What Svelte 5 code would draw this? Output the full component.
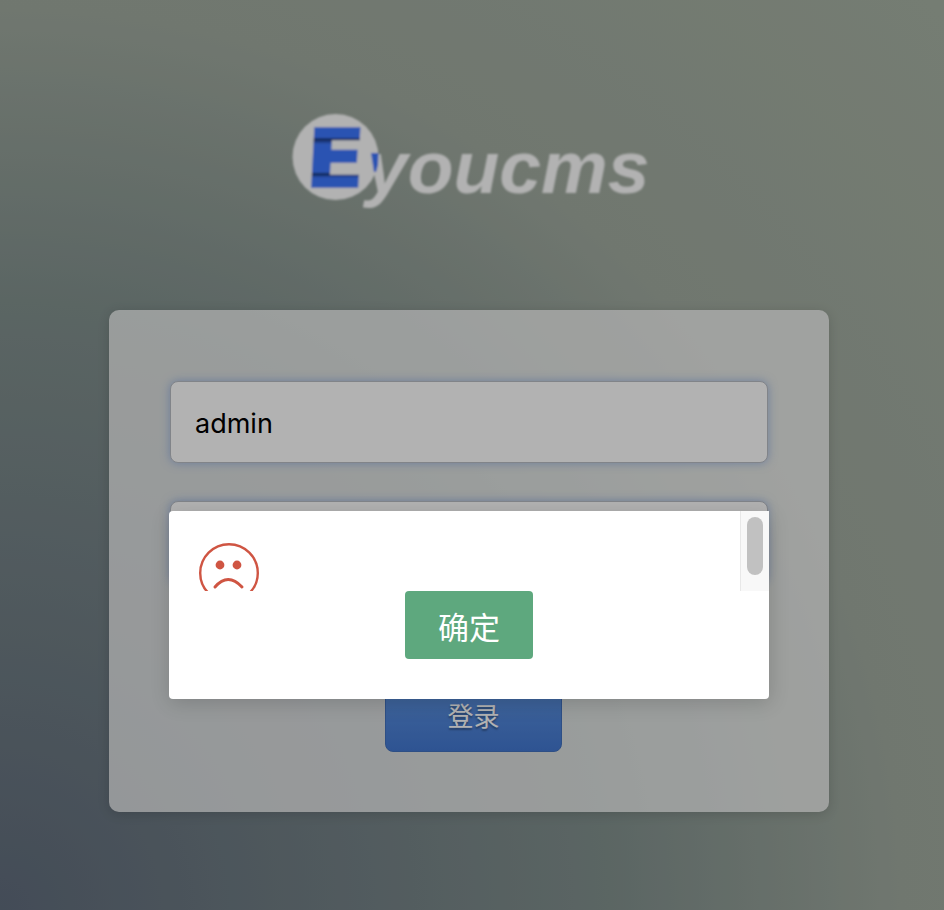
<script>
  let username = $state("admin");
  let password = $state("");
  let dialogOpen = $state(true);
</script>

<div class="page">
  <svg class="logo" viewBox="290 110 360 100" width="360" height="100" aria-label="Eyoucms">
    <defs>
      <!-- gradient runs in the E's own transformed coordinates -->
      <linearGradient id="e-fill" gradientUnits="userSpaceOnUse" x1="0" y1="-59" x2="0" y2="1">
        <stop offset="0" stop-color="#3c78ff" />
        <stop offset="0.16" stop-color="#3c78ff" />
        <stop offset="0.18" stop-color="#17306e" />
        <stop offset="0.27" stop-color="#3c78ff" />
        <stop offset="0.74" stop-color="#3c78ff" />
        <stop offset="0.76" stop-color="#17306e" />
        <stop offset="0.83" stop-color="#3c78ff" />
        <stop offset="1" stop-color="#3c78ff" />
      </linearGradient>
      <filter id="soft"><feGaussianBlur stdDeviation="0.8" /></filter>
      <filter id="soft-icon"><feGaussianBlur stdDeviation="0.35" /></filter>
    </defs>
    <g filter="url(#soft)">
      <circle cx="335.5" cy="157" r="43" fill="#fff" />
      <text class="logo-e" transform="translate(304 187) skewX(-3) scale(1.08 1)" fill="url(#e-fill)" stroke="url(#e-fill)" stroke-width="1.6">E</text>
      <text class="logo-word" x="366" y="193">youcms</text>
      <polygon points="371,153 378.5,153 378,165 376,172 374,172" fill="#3c78ff" />
    </g>
  </svg>

  <form class="card" onsubmit={(e) => e.preventDefault()}>
    <input class="field" type="text" bind:value={username} />
    <input class="field" type="password" bind:value={password} />
    <button class="submit" type="submit">登录</button>
  </form>

  <div class="shade"></div>

  {#if dialogOpen}
    <div class="dialog">
      <div class="dialog-body">
        <div class="dialog-content">
          <svg class="sad" viewBox="0 0 60 60" width="60" height="60">
            <g filter="url(#soft-icon)">
              <circle cx="30" cy="30" r="28.8" fill="none" stroke="#cf5443" stroke-width="2.4" />
              <circle cx="21" cy="22" r="4.4" fill="#cf5443" />
              <circle cx="38" cy="22" r="4.4" fill="#cf5443" />
              <path d="M16 44 Q29 29 43 44" fill="none" stroke="#cf5443" stroke-width="3" stroke-linecap="round" />
            </g>
          </svg>
        </div>
        <div class="scrollbar"><div class="thumb"></div></div>
      </div>
      <div class="dialog-actions">
        <button class="confirm" type="button" onclick={() => (dialogOpen = true)}>确定</button>
      </div>
    </div>
  {/if}
</div>

<style>
  :global(body) {
    margin: 0;
  }

  .page {
    position: relative;
    height: 910px;
    overflow: hidden;
    display: flex;
    flex-direction: column;
    align-items: center;
    background: radial-gradient(circle at 0% 100%, #616d7d 0, #83928f 610px, #a1aba0 900px, #a8b3a5 1300px);
  }

  .logo {
    display: block;
    flex: none;
    margin-top: 110px;
    margin-left: -4px;
  }

  .logo-e {
    font-family: "DejaVu Sans", sans-serif;
    font-size: 81px;
    font-weight: 700;
  }

  .logo-word {
    font-family: "Liberation Sans", sans-serif;
    font-size: 75px;
    font-weight: 700;
    font-style: italic;
    fill: #fff;
  }

  .card {
    box-sizing: border-box;
    width: 720px;
    height: 502px;
    flex: none;
    margin-top: 100px;
    margin-left: -6px;
    padding: 71px 61px 60px;
    display: flex;
    flex-direction: column;
    gap: 38px;
    border-radius: 10px;
    background: rgba(255, 255, 255, 0.72);
    box-shadow: 0 2px 12px rgba(0, 0, 0, 0.15);
  }

  .field {
    box-sizing: border-box;
    flex: none;
    width: 598px;
    height: 82px;
    padding: 2px 24px 0;
    border: 1px solid #b9bdc4;
    border-radius: 8px;
    background: #fff;
    box-shadow: 0 0 10px rgba(100, 140, 220, 0.55);
    font-family: Inter, sans-serif;
    font-size: 27px;
    color: #000;
    outline: none;
  }

  .submit {
    box-sizing: border-box;
    flex: none;
    align-self: flex-start;
    width: 177px;
    height: 70px;
    margin-top: 61px;
    margin-left: 215px;
    padding: 0 0 5px;
    border: 1px solid #4271bf;
    border-radius: 8px;
    background: linear-gradient(#5f95e0, #4378d2);
    font-family: "Noto Sans CJK SC", sans-serif;
    font-size: 26px;
    color: #fff;
    text-shadow: 0 2px 2px rgba(0, 0, 0, 0.35);
  }

  .shade {
    position: absolute;
    inset: 0;
    background: rgba(0, 0, 0, 0.3);
  }

  .dialog {
    position: absolute;
    left: 169px;
    top: 511px;
    width: 600px;
    height: 188px;
    border-radius: 4px;
    background: #fff;
    box-shadow: 1px 4px 20px rgba(0, 0, 0, 0.16);
  }

  .dialog-body {
    height: 80px;
    display: flex;
  }

  .dialog-content {
    box-sizing: border-box;
    flex: 1;
    padding: 32px 0 0 30px;
    overflow: hidden;
  }

  .sad {
    display: block;
  }

  .scrollbar {
    box-sizing: border-box;
    flex: none;
    width: 29px;
    padding: 6px 6px 0 6px;
    border-left: 1px solid #e8e8e8;
    background: #f8f8f8;
  }

  .thumb {
    width: 16px;
    height: 58px;
    border-radius: 8px;
    background: #c1c1c1;
  }

  .dialog-actions {
    display: flex;
    justify-content: center;
  }

  .confirm {
    width: 128px;
    height: 68px;
    border: 0;
    border-radius: 4px;
    background: #5ea87e;
    font-family: "Noto Sans CJK SC", sans-serif;
    font-size: 31px;
    color: #fff;
  }
</style>
